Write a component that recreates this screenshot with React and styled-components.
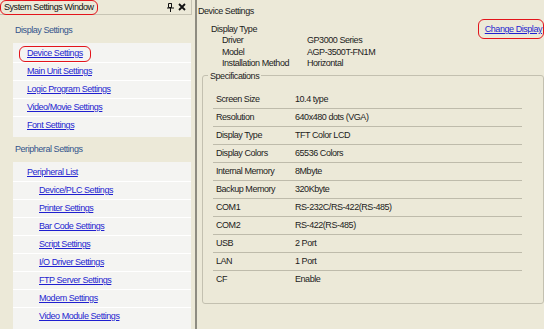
import React from "react";
import styled, { createGlobalStyle } from "styled-components";

const GlobalStyle = createGlobalStyle`
  *, *::before, *::after { box-sizing: border-box; }
  html, body { margin: 0; padding: 0; }
  body {
    background: #ece9d8;
    font-family: "Liberation Sans", Arial, sans-serif;
    font-size: 9px;
    letter-spacing: -0.45px;
    color: #1c1c1c;
  }
`;

const displayItems = [
  { label: "Device Settings", marked: true },
  { label: "Main Unit Settings" },
  { label: "Logic Program Settings" },
  { label: "Video/Movie Settings" },
  { label: "Font Settings" },
];

const peripheralItems = [
  { label: "Peripheral List" },
  { label: "Device/PLC Settings", sub: true },
  { label: "Printer Settings", sub: true },
  { label: "Bar Code Settings", sub: true },
  { label: "Script Settings", sub: true },
  { label: "I/O Driver Settings", sub: true },
  { label: "FTP Server Settings", sub: true },
  { label: "Modem Settings", sub: true },
  { label: "Video Module Settings", sub: true },
];

const displayProps = [
  ["Driver", "GP3000 Series"],
  ["Model", "AGP-3500T-FN1M"],
  ["Installation Method", "Horizontal"],
];

const specs = [
  ["Screen Size", "10.4 type"],
  ["Resolution", "640x480 dots (VGA)"],
  ["Display Type", "TFT Color LCD"],
  ["Display Colors", "65536 Colors"],
  ["Internal Memory", "8Mbyte"],
  ["Backup Memory", "320Kbyte"],
  ["COM1", "RS-232C/RS-422(RS-485)"],
  ["COM2", "RS-422(RS-485)"],
  ["USB", "2 Port"],
  ["LAN", "1 Port"],
  ["CF", "Enable"],
];

const PinIcon = () => (
  <svg width="7" height="9" viewBox="0 0 7 9">
    <path d="M1.5 0.5h3v4h-3z M4.5 0.5v4" fill="none" stroke="#111" strokeWidth="1" />
    <path d="M0 5h7" stroke="#111" strokeWidth="1" />
    <path d="M3.5 5v4" stroke="#111" strokeWidth="1" />
  </svg>
);

const CloseIcon = () => (
  <svg width="8" height="8" viewBox="0 0 8 8">
    <path d="M1 1L7 7M7 1L1 7" stroke="#111" strokeWidth="1.8" />
  </svg>
);

const App = () => {
  return (
    <Window>
      <GlobalStyle />
      <Sidebar>
        <TitleBar>
          <Marked $inset="-2px -4px -2px -4px">
            <TitleText>System Settings Window</TitleText>
          </Marked>
          <TitleIcons>
            <PinIcon />
            <CloseIcon />
          </TitleIcons>
        </TitleBar>
        <SideBody>
          <Heading>Display Settings</Heading>
          <Group>
            {displayItems.map((item) => (
              <Row key={item.label} $sub={item.sub}>
                {item.marked ? (
                  <Marked $inset="-2px -8px -3px -8px">
                    <NavLink href="#">{item.label}</NavLink>
                  </Marked>
                ) : (
                  <NavLink href="#">{item.label}</NavLink>
                )}
              </Row>
            ))}
          </Group>
          <Heading>Peripheral Settings</Heading>
          <Group $grow>
            {peripheralItems.map((item) => (
              <Row key={item.label} $sub={item.sub}>
                <NavLink href="#">{item.label}</NavLink>
              </Row>
            ))}
          </Group>
        </SideBody>
      </Sidebar>
      <Splitter />
      <Content>
        <PageTitle>Device Settings</PageTitle>
        <DisplayRow>
          <span>Display Type</span>
          <Marked $inset="-5px -2px -4px -7px">
            <NavLink href="#">Change Display</NavLink>
          </Marked>
        </DisplayRow>
        {displayProps.map(([label, value]) => (
          <PropRow key={label}>
            <PropLabel>{label}</PropLabel>
            <span>{value}</span>
          </PropRow>
        ))}
        <SpecBox>
          <Legend>Specifications</Legend>
          <SpecList>
            {specs.map(([label, value]) => (
              <SpecRow key={label}>
                <SpecLabel>{label}</SpecLabel>
                <span>{value}</span>
              </SpecRow>
            ))}
          </SpecList>
        </SpecBox>
      </Content>
    </Window>
  );
};

const Window = styled.div`
  display: flex;
  width: 544px;
  height: 329px;
  overflow: hidden;
  background: #ece9d8;
  line-height: 11px;
`;

const Sidebar = styled.aside`
  width: 195px;
  flex: none;
  display: flex;
  flex-direction: column;
`;

const TitleBar = styled.div`
  width: 192px;
  height: 15px;
  flex: none;
  display: flex;
  align-items: center;
  justify-content: space-between;
  padding: 0 5px 0 4px;
  border-right: 1px solid #c7c4b4;
  border-bottom: 1px solid #c7c4b4;
`;

const TitleText = styled.span`
  color: #111;
`;

const TitleIcons = styled.div`
  display: flex;
  align-items: center;
  gap: 4px;
`;

const Marked = styled.span`
  position: relative;
  display: inline-block;
  &::after {
    content: "";
    position: absolute;
    inset: ${(p) => p.$inset};
    border: 1.5px solid #e3141b;
    border-radius: 6px;
    pointer-events: none;
  }
`;

const SideBody = styled.div`
  flex: 1;
  display: flex;
  flex-direction: column;
  padding-top: 3px;
  min-height: 0;
`;

const Heading = styled.div`
  height: 25px;
  flex: none;
  display: flex;
  align-items: center;
  padding-left: 15px;
  color: #34548c;
`;

const Group = styled.div`
  margin-left: 13px;
  width: 178px;
  background: #f4f4f2;
  padding: 2px 0 2px;
  flex: ${(p) => (p.$grow ? "1" : "none")};
`;

const Row = styled.div`
  height: 18px;
  display: flex;
  align-items: center;
  padding-left: ${(p) => (p.$sub ? "26px" : "14px")};
  border-bottom: 1px solid #ffffff;
  &:last-child {
    border-bottom-color: transparent;
  }
`;

const NavLink = styled.a`
  color: #1f1fd0;
  text-decoration: underline;
  white-space: nowrap;
`;

const Splitter = styled.div`
  width: 2px;
  flex: none;
  background: #8e8c81;
`;

const Content = styled.main`
  flex: 1;
  display: flex;
  flex-direction: column;
  padding: 6px 2px 0 0;
`;

const PageTitle = styled.div`
  height: 11px;
  padding-left: 1px;
`;

const DisplayRow = styled.div`
  height: 11px;
  margin-top: 7px;
  display: flex;
  align-items: center;
  justify-content: space-between;
  padding-left: 14px;
`;

const PropRow = styled.div`
  height: 11.5px;
  display: flex;
  align-items: center;
  padding-left: 25px;
`;

const PropLabel = styled.span`
  width: 85px;
  flex: none;
`;

const SpecBox = styled.fieldset`
  margin: 0 -2px 0 5px;
  padding: 0 21px 14px 10px;
  border: 1px solid #c3c0b0;
  border-radius: 3px;
  min-width: 0;
`;

const Legend = styled.legend`
  padding: 0 2px;
  margin-left: -5px;
  line-height: 12px;
`;

const SpecList = styled.div`
  margin-top: 9px;
`;

const SpecRow = styled.div`
  height: 18px;
  display: flex;
  align-items: center;
  padding-left: 3px;
  border-bottom: 1px solid #bebbab;
  &:last-child {
    border-bottom-color: transparent;
  }
`;

const SpecLabel = styled.span`
  width: 79px;
  flex: none;
`;

export default App;
